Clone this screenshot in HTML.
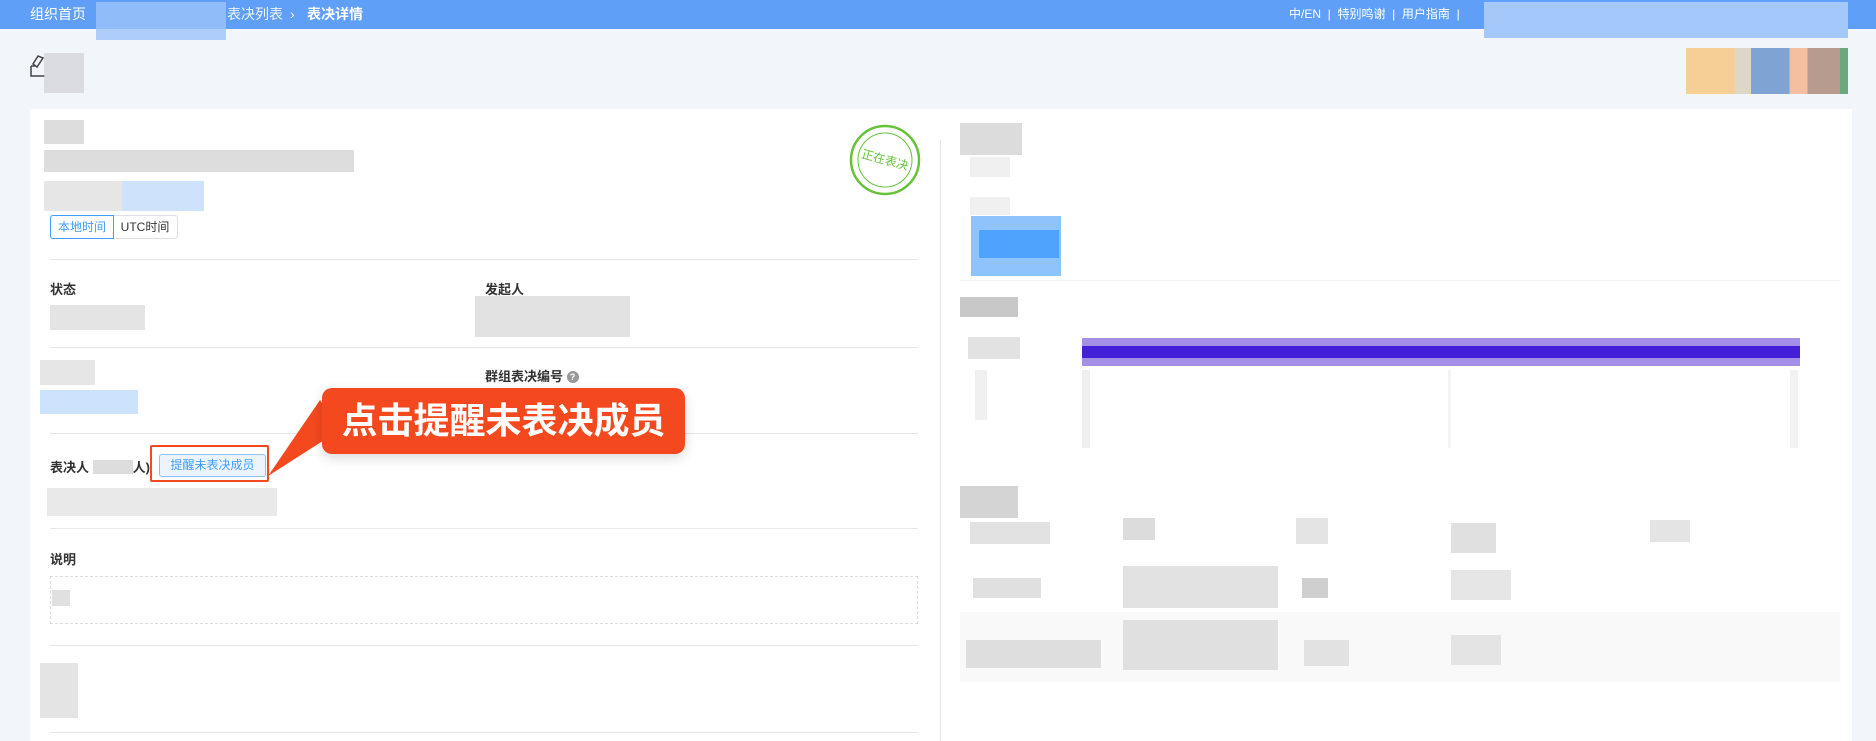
<!DOCTYPE html>
<html><head><meta charset="utf-8"><style>
*{margin:0;padding:0;box-sizing:border-box}
body{width:1876px;height:741px;overflow:hidden;background:#f2f5fa;font-family:"Liberation Sans","Noto Sans CJK SC",sans-serif;position:relative;color:#333}
.a{position:absolute}
.bar{left:0;top:0;width:1876px;height:29px;background:#5f9ff8}
.w{color:#fff;font-size:14px;line-height:29px}
.blk{position:absolute}
.hr{position:absolute;left:50px;width:868px;height:1px;background:#e6e6e6}
.lab{position:absolute;font-size:13px;font-weight:bold;color:#333}
</style></head><body>
<div class="a bar"></div>
<div class="a w" style="left:30px;top:0">组织首页</div>
<div class="blk" style="left:96px;top:2px;width:130px;height:38px;background:#9dc3fa;opacity:.8"></div>
<div class="a w" style="left:227px;top:0;opacity:.9">表决列表</div>
<div class="a w" style="left:290px;top:0">›</div>
<div class="a w" style="left:307px;top:0;font-weight:bold">表决详情</div>
<div class="a w" style="left:1289px;top:0;font-size:12px">中/EN &nbsp;| &nbsp;特别鸣谢 &nbsp;| &nbsp;用户指南 &nbsp;|</div>
<div class="blk" style="left:1484px;top:2px;width:364px;height:36px;background:#a5c8fa"></div>
<svg class="a" style="left:29px;top:53px" width="18" height="25" viewBox="0 0 18 25"><path d="M2 13v10h14M2 13h4M9 3l-5 8 4 3 6-9z" fill="none" stroke="#444" stroke-width="1.5"/></svg>
<div class="blk" style="left:44px;top:53px;width:40px;height:40px;background:#d0d2d6;opacity:.7"></div>
<div class="blk" style="left:1686px;top:48px;width:162px;height:46px;background:linear-gradient(90deg,#f5cf95 0 30%,#dfd7c6 30% 40%,#7fa3d3 40% 64%,#f3bfa0 64% 75%,#b79b8e 75% 95%,#6aa880 95%)"></div>
<div class="a" style="left:30px;top:109px;width:1822px;height:632px;background:#fff"></div>
<div class="a" style="left:940px;top:140px;width:1px;height:601px;background:#e4e4e4"></div>
<!-- left blurred -->
<div class="blk" style="left:44px;top:120px;width:40px;height:24px;background:#ddd"></div>
<div class="blk" style="left:44px;top:150px;width:310px;height:22px;background:#ddd"></div>
<div class="blk" style="left:44px;top:181px;width:78px;height:30px;background:#e6e6e6"></div>
<div class="blk" style="left:122px;top:181px;width:82px;height:30px;background:#cfe2fc"></div>
<div class="a" style="left:50px;top:215px;width:128px;height:24px;border:1px solid #dcdfe6;border-radius:3px;font-size:12px;line-height:22px;display:flex">
<span style="width:64px;text-align:center;color:#409eff;border:1px solid #409eff;margin:-1px;border-radius:3px 0 0 3px">本地时间</span><span style="flex:1;text-align:center">UTC时间</span></div>
<svg class="a" style="left:849px;top:124px" width="72" height="72"><circle cx="36" cy="36" r="34" fill="none" stroke="#67c23a" stroke-width="2.5"/><circle cx="36" cy="36" r="27" fill="none" stroke="#67c23a" stroke-width="1"/><text x="36" y="40" text-anchor="middle" font-size="12" fill="#67c23a" transform="rotate(15 36 36)" font-family="Noto Sans CJK SC">正在表决</text></svg>
<div class="hr" style="top:259px"></div>
<div class="lab" style="left:50px;top:279px">状态</div>
<div class="lab" style="left:485px;top:279px">发起人</div>
<div class="blk" style="left:50px;top:305px;width:95px;height:25px;background:#e4e4e4"></div>
<div class="blk" style="left:475px;top:296px;width:155px;height:41px;background:#e2e2e2"></div>
<div class="hr" style="top:347px"></div>
<div class="blk" style="left:40px;top:360px;width:55px;height:25px;background:#e6e6e6"></div>
<div class="blk" style="left:40px;top:390px;width:98px;height:24px;background:#cde2fd"></div>
<div class="lab" style="left:485px;top:366px">群组表决编号 <span style="display:inline-block;width:12px;height:12px;border-radius:6px;background:#999;color:#fff;font-size:9px;text-align:center;line-height:12px;vertical-align:1px">?</span></div>
<div class="hr" style="top:433px"></div>
<div class="lab" style="left:50px;top:457px">表决人 <span style="display:inline-block;width:40px;height:14px;background:#ddd;vertical-align:-2px"></span>人)</div>
<div class="a" style="left:150px;top:445px;width:119px;height:37px;border:2px solid #f4491f;border-radius:2px"></div>
<div class="a" style="left:159px;top:454px;width:107px;height:23px;border:1px solid #8cc2fb;background:#ecf5ff;border-radius:3px;color:#409eff;font-size:12px;text-align:center;line-height:21px">提醒未表决成员</div>
<svg class="a" style="left:260px;top:380px" width="100" height="100"><path d="M60 20 L8 96 L80 50 Z" fill="#f4491f"/></svg>
<div class="a" style="left:322px;top:388px;width:363px;height:66px;background:#f4491f;border-radius:10px;color:#fff;font-size:36px;font-weight:bold;line-height:66px;text-align:center;box-shadow:0 4px 12px rgba(0,0,0,.15)">点击提醒未表决成员</div>
<div class="blk" style="left:47px;top:488px;width:230px;height:28px;background:#e4e4e4;opacity:.8"></div>
<div class="hr" style="top:528px"></div>
<div class="lab" style="left:50px;top:549px">说明</div>
<div class="a" style="left:50px;top:576px;width:868px;height:48px;border:1px dashed #ddd"></div>
<div class="blk" style="left:52px;top:590px;width:18px;height:16px;background:#e0e0e0"></div>
<div class="hr" style="top:645px"></div>
<div class="blk" style="left:40px;top:663px;width:38px;height:55px;background:#e4e4e4"></div>
<div class="hr" style="top:732px"></div>
<!-- right -->
<div class="blk" style="left:960px;top:123px;width:62px;height:32px;background:#dcdcdc"></div>
<div class="blk" style="left:970px;top:157px;width:40px;height:20px;background:#f0f0f0"></div>
<div class="blk" style="left:970px;top:197px;width:40px;height:18px;background:#f0f0f0"></div>
<div class="blk" style="left:971px;top:216px;width:90px;height:60px;background:#8fc3fc"></div>
<div class="blk" style="left:979px;top:230px;width:80px;height:28px;background:#4ea4fd"></div>
<div class="hr" style="left:960px;width:880px;top:280px;background:#f3f3f3"></div>
<div class="blk" style="left:960px;top:297px;width:58px;height:20px;background:#c8c8c8"></div>
<div class="blk" style="left:968px;top:337px;width:52px;height:22px;background:#e2e2e2"></div>
<div class="blk" style="left:1082px;top:338px;width:718px;height:28px;background:#a48fe8"></div>
<div class="blk" style="left:1082px;top:346px;width:718px;height:12px;background:#4120d8"></div>
<div class="blk" style="left:1082px;top:370px;width:8px;height:78px;background:#efefef"></div>
<div class="blk" style="left:1448px;top:370px;width:3px;height:78px;background:#f4f4f4"></div>
<div class="blk" style="left:1790px;top:370px;width:8px;height:78px;background:#f2f2f2"></div>
<div class="blk" style="left:975px;top:370px;width:12px;height:50px;background:#f0f0f0"></div>
<div class="blk" style="left:960px;top:486px;width:58px;height:32px;background:#d4d4d4"></div>
<div class="blk" style="left:970px;top:522px;width:80px;height:22px;background:#e2e2e2"></div>
<div class="blk" style="left:1123px;top:518px;width:32px;height:22px;background:#dcdcdc"></div>
<div class="blk" style="left:1296px;top:518px;width:32px;height:26px;background:#e4e4e4"></div>
<div class="blk" style="left:1451px;top:523px;width:45px;height:30px;background:#e0e0e0"></div>
<div class="blk" style="left:1650px;top:520px;width:40px;height:22px;background:#e4e4e4"></div>
<div class="blk" style="left:973px;top:578px;width:68px;height:20px;background:#e0e0e0"></div>
<div class="blk" style="left:1123px;top:566px;width:155px;height:42px;background:#e2e2e2"></div>
<div class="blk" style="left:1302px;top:578px;width:26px;height:20px;background:#cfcfcf"></div>
<div class="blk" style="left:1451px;top:570px;width:60px;height:30px;background:#e6e6e6"></div>
<div class="blk" style="left:960px;top:612px;width:880px;height:70px;background:#f9f9f9"></div>
<div class="blk" style="left:966px;top:640px;width:135px;height:28px;background:#dedede"></div>
<div class="blk" style="left:1123px;top:620px;width:155px;height:50px;background:#e0e0e0"></div>
<div class="blk" style="left:1304px;top:640px;width:45px;height:26px;background:#e2e2e2"></div>
<div class="blk" style="left:1451px;top:635px;width:50px;height:30px;background:#e4e4e4"></div>
</body></html>
